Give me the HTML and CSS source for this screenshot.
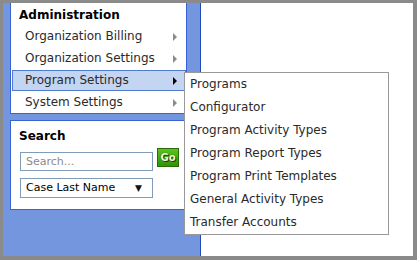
FILE: index.html
```html
<!DOCTYPE html>
<html>
<head>
<meta charset="utf-8">
<link rel="stylesheet" href="styles.css">
</head>
<body>
<div class="frame">
  <div class="sidebar">
    <div class="panel admin">
      <div class="heading admin-heading">Administration</div>
      <div class="item"><span>Organization Billing</span><span class="arrow"></span></div>
      <div class="item"><span>Organization Settings</span><span class="arrow"></span></div>
      <div class="item active"><span>Program Settings</span><span class="arrow"></span>
        <div class="submenu">
          <div class="sub-item">Programs</div>
          <div class="sub-item">Configurator</div>
          <div class="sub-item">Program Activity Types</div>
          <div class="sub-item">Program Report Types</div>
          <div class="sub-item">Program Print Templates</div>
          <div class="sub-item">General Activity Types</div>
          <div class="sub-item">Transfer Accounts</div>
        </div>
      </div>
      <div class="item"><span>System Settings</span><span class="arrow"></span></div>
    </div>
    <div class="panel search">
      <div class="heading search-heading">Search</div>
      <div class="search-row">
        <input class="search-input" type="text" placeholder="Search...">
        <button class="go">Go</button>
      </div>
      <div class="select"><span>Case Last Name</span><span class="caret">▼</span></div>
    </div>
  </div>
  <div class="main"></div>
</div>
</body>
</html>
```

FILE: styles.css
```css
html, body {
  margin: 0;
  padding: 0;
  background: #ffffff;
}
body {
  font-family: "DejaVu Sans", Verdana, sans-serif;
  font-size: 12px;
  color: #2a2a2a;
}
.frame {
  width: 417px;
  height: 260px;
  box-sizing: border-box;
  border-style: solid;
  border-color: #8a8a8a;
  border-width: 3px 4px 4px 3px;
  display: flex;
  background: #ffffff;
}
.sidebar {
  flex: none;
  width: 198px;
  box-sizing: border-box;
  background: #7496df;
  border-right: 1px solid #2348b8;
  padding-left: 7px;
}
.panel {
  width: 177px;
  box-sizing: border-box;
  background: #ffffff;
  border: 1px solid #3563d3;
}
.admin {
  border-top: none;
  height: 111px;
  position: relative;
}
.heading {
  font-weight: bold;
  font-size: 12px;
  color: #000000;
}
.admin-heading {
  height: 23px;
  line-height: 24px;
  padding-left: 8px;
}
.item {
  position: relative;
  height: 21px;
  margin: 0 0 1px 1px;
  box-sizing: border-box;
  border: 1px solid transparent;
  padding: 0 8px 0 12px;
  display: flex;
  align-items: center;
  justify-content: space-between;
  line-height: 19px;
}
.item.active {
  background: #c4d5f1;
  border-color: #4f7bd0;
}
.arrow {
  width: 0;
  height: 0;
  border-top: 4px solid transparent;
  border-bottom: 4px solid transparent;
  border-left: 4px solid #8a8a8a;
}
.item.active .arrow {
  border-left-color: #000000;
}
.submenu {
  position: absolute;
  left: 171px;
  top: 1px;
  width: 205px;
  box-sizing: border-box;
  background: #ffffff;
  border: 1px solid #999999;
  padding: 0 0 0 5px;
  z-index: 5;
}
.sub-item {
  height: 23px;
  line-height: 23px;
  white-space: nowrap;
}
.search {
  margin-top: 6px;
  height: 90px;
  padding: 0 0 0 8px;
}
.search-heading {
  height: 24px;
  line-height: 30px;
}
.search-row {
  display: flex;
  align-items: flex-start;
  padding-left: 1px;
  gap: 4px;
}
.search-input {
  margin: 7px 0 0 0;
  width: 133px;
  height: 19px;
  box-sizing: border-box;
  border: 1px solid #7f9db9;
  padding: 0 0 0 5px;
  font-family: "DejaVu Sans", Verdana, sans-serif;
  font-size: 11px;
  color: #2a2a2a;
  outline: none;
}
.search-input::placeholder {
  color: #8a8a8a;
}
.go {
  width: 22px;
  height: 19px;
  margin: 3px 0 0 0;
  padding: 0;
  box-sizing: border-box;
  border: 1px solid #2a6a07;
  background: linear-gradient(#5cc21f, #2f9408);
  color: #f2f7d8;
  font-family: "DejaVu Sans", Verdana, sans-serif;
  font-size: 10px;
  font-weight: bold;
  line-height: 17px;
  text-shadow: 0 0 1px #1c3d05, 1px 1px 0 #1c3d05;
}
.select {
  margin: 7px 0 0 1px;
  width: 133px;
  height: 20px;
  box-sizing: border-box;
  border: 1px solid #7f9db9;
  display: flex;
  align-items: center;
  justify-content: space-between;
  padding: 0 10px 0 5px;
  color: #000000;
  font-size: 11px;
  line-height: 18px;
}
.caret {
  font-size: 9px;
  color: #111111;
}
.main {
  flex: 1;
  background: #ffffff;
}
```
